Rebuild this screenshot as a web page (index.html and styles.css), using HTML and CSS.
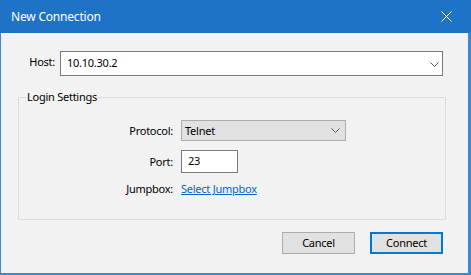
FILE: index.html
```html
<!DOCTYPE html>
<html>
<head>
<meta charset="utf-8">
<title>New Connection</title>
<link rel="stylesheet" href="styles.css">
</head>
<body>
<div class="window">
  <div class="titlebar">
    <span class="title">New Connection</span>
    <svg class="close" width="11" height="11" viewBox="0 0 11 11"><path d="M0.5 0.5 L10.5 10.5 M10.5 0.5 L0.5 10.5" stroke="#fff" stroke-width="1" fill="none"/></svg>
  </div>
  <div class="client">
    <div class="host-row">
      <label class="host-label">Host:</label>
      <div class="combo">
        <span class="combo-text">10.10.30.2</span>
        <svg class="chev" width="9" height="5" viewBox="0 0 9 5"><path d="M0.5 0.5 L4.5 4.5 L8.5 0.5" stroke="#555" stroke-width="1" fill="none"/></svg>
      </div>
    </div>
    <fieldset class="group">
      <legend class="legend">Login Settings</legend>
      <div class="form">
        <span class="lbl">Protocol:</span>
        <div class="select">
          <span class="select-text">Telnet</span>
          <svg class="chev" width="9" height="5" viewBox="0 0 9 5"><path d="M0.5 0.5 L4.5 4.5 L8.5 0.5" stroke="#555" stroke-width="1" fill="none"/></svg>
        </div>
        <span class="lbl lbl-port">Port:</span>
        <div class="port"><span>23</span></div>
        <span class="lbl lbl-jump">Jumpbox:</span>
        <a class="link" href="#">Select Jumpbox</a>
      </div>
    </fieldset>
    <div class="buttons">
      <button class="btn">Cancel</button>
      <button class="btn btn-default">Connect</button>
    </div>
  </div>
</div>
</body>
</html>
```

FILE: styles.css
```css
html, body {
  margin: 0;
  padding: 0;
}
body {
  width: 471px;
  height: 275px;
  overflow: hidden;
  font-family: "Noto Sans", "Open Sans", sans-serif;
  font-size: 11px;
  letter-spacing: -0.25px;
  line-height: 16px;
  color: #000;
}
.window {
  width: 471px;
  height: 275px;
  background: #3a88d6;
  display: flex;
  flex-direction: column;
  box-sizing: border-box;
}
.titlebar {
  height: 33px;
  flex: none;
  background: #1f73c6;
  display: flex;
  align-items: center;
  padding-left: 11px;
  color: #fff;
  font-size: 12px;
  letter-spacing: -0.2px;
}
.title {
  flex: 1;
}
.close {
  margin-right: 19px;
  display: block;
}
.client {
  flex: 1;
  margin: 0 3px 2px 1px;
  background: #f2f2f2;
  display: flex;
  flex-direction: column;
  padding-top: 18px;
}
.host-row {
  display: flex;
  align-items: flex-start;
  padding: 0 25px 0 10px;
}
.host-label {
  width: 44px;
  text-align: right;
  margin-right: 5px;
  margin-top: 3px;
}
.combo {
  flex: 1;
  height: 25px;
  box-sizing: border-box;
  border: 1px solid #7a7a7a;
  background: #fff;
  display: flex;
  align-items: flex-start;
  padding: 3px 3px 0 6px;
}
.combo-text, .select-text {
  flex: 1;
}
.combo .chev {
  margin-top: 7px;
}
.group {
  margin: 13px 22px 0 17px;
  padding: 0;
  border: 1px solid #dcdcdc;
  height: 131px;
  box-sizing: border-box;
  min-width: 0;
}
.legend {
  padding: 0 1px;
  margin-left: 7px;
  line-height: 16px;
}
.form {
  display: grid;
  grid-template-columns: 154px auto;
  column-gap: 8px;
  justify-items: start;
  align-items: center;
  padding-top: 15px;
}
.lbl {
  justify-self: end;
}
.select {
  width: 165px;
  height: 21px;
  box-sizing: border-box;
  border: 1px solid #adadad;
  background: #e1e1e1;
  display: flex;
  align-items: center;
  padding: 0 5px 0 3px;
}
.port {
  width: 57px;
  height: 23px;
  box-sizing: border-box;
  border: 1px solid #7a7a7a;
  background: #fff;
  padding: 2px 0 0 6px;
  margin-top: 9px;
}
.lbl-port {
  margin-top: 9px;
}
.lbl-jump, .link {
  margin-top: 8px;
}
.link {
  color: #0066cc;
  text-decoration: underline;
}
.buttons {
  display: flex;
  justify-content: flex-end;
  gap: 15px;
  padding-right: 25px;
  margin-top: 12px;
}
.btn {
  font: inherit;
  letter-spacing: inherit;
  width: 73px;
  height: 22px;
  box-sizing: border-box;
  background: #e1e1e1;
  border: 1px solid #adadad;
  color: #000;
  padding: 0;
  margin: 0;
}
.btn-default {
  border: 2px solid #0078d7;
}
```
